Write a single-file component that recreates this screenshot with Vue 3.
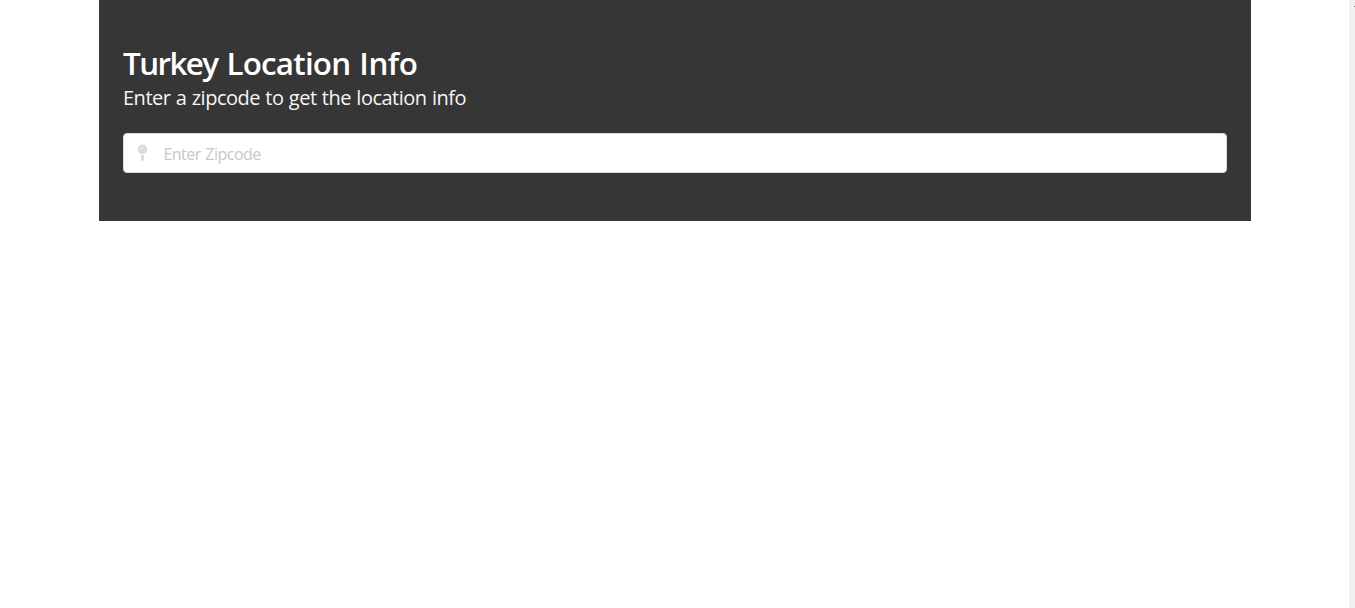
<script setup>
import { ref } from 'vue'

const zipcode = ref('')
</script>

<template>
  <div class="page">
    <main class="content">
      <section class="hero">
        <h1 class="title"><span class="lead">Turkey</span> Location <span class="last">Info</span></h1>
        <h2 class="subtitle">Enter a zipcode to get the location info</h2>
        <label class="field">
          <svg class="pin" viewBox="0.5 -0.6 10 17" aria-hidden="true">
            <circle cx="5" cy="4.8" r="4.8" />
            <path d="M3.6 10.4h2.8v5.2l-.7 .8q-.7.3-1.4 0l-.7-.8z" />
            <path class="shine" d="M2.7 4.8q0-2.3 2.3-2.3" />
          </svg>
          <input v-model="zipcode" type="text" placeholder="Enter Zipcode" />
        </label>
      </section>
    </main>
    <aside class="track"><i class="arrow"></i></aside>
  </div>
</template>

<style>
html,
body {
  margin: 0;
  overflow: hidden;
  background: #fff;
}
</style>

<style scoped>
.page {
  display: flex;
  height: 100vh;
  font-family: 'Open Sans', 'Noto Sans', sans-serif;
}
.content {
  flex: 1;
  display: flex;
  justify-content: center;
  align-items: flex-start;
  padding-left: 1px;
}
.hero {
  box-sizing: border-box;
  width: 1152px;
  height: 221px;
  padding: 45px 24px 48px;
  background: #363636;
}
.title {
  margin: 0;
  height: 37px;
  font-size: 31.4px;
  line-height: 36px;
  font-weight: 600;
  letter-spacing: -0.8px;
  word-spacing: 1.6px;
  color: #fff;
  white-space: nowrap;
}
.lead {
  letter-spacing: -1.6px;
}
.last {
  letter-spacing: -0.5px;
}
.subtitle {
  margin: 0 0 21px;
  height: 30px;
  font-size: 20px;
  line-height: 32px;
  font-weight: 400;
  letter-spacing: -0.5px;
  word-spacing: 0.65px;
  color: #f5f5f5;
  white-space: nowrap;
}
.field {
  box-sizing: border-box;
  display: flex;
  align-items: center;
  height: 40px;
  border: 1px solid #dbdbdb;
  border-radius: 4px;
  background: #fff;
}
.pin {
  flex: none;
  width: 10px;
  height: 17px;
  margin: 0 15.9px 1px 13.5px;
  overflow: visible;
  fill: #dbdbdb;
}
.shine {
  fill: none;
  stroke: #f1f1f1;
  stroke-width: 0.8;
  stroke-linecap: round;
}
input {
  flex: 1;
  min-width: 0;
  height: 36px;
  margin: 2px 12px 0 0;
  padding: 0;
  border: 0;
  outline: 0;
  background: transparent;
  font-family: inherit;
  font-size: 16px;
  font-weight: 400;
  letter-spacing: -0.5px;
  word-spacing: 0.8px;
  color: #363636;
}
input::placeholder {
  color: #c8c8c8;
  opacity: 1;
}
.track {
  width: 6px;
  background: #f1f1f1;
}
.arrow {
  display: block;
  width: 1px;
  height: 1px;
  margin: 6px 0 0 5px;
  background: #777;
}
</style>
